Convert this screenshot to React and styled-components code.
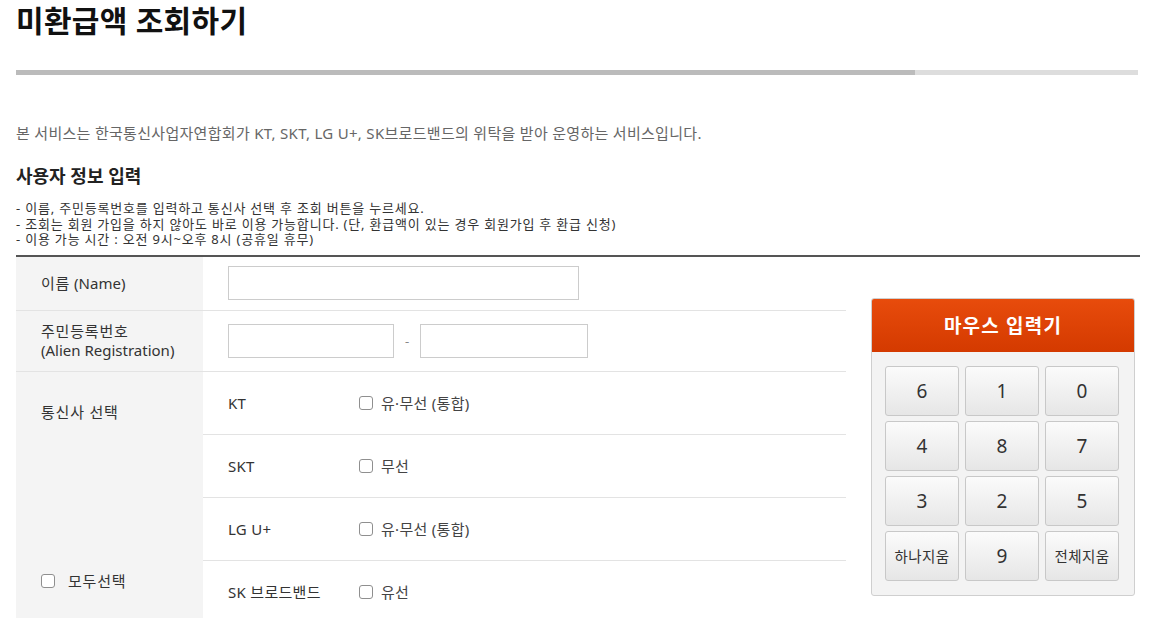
import React, { useState } from 'react';
import styled, { createGlobalStyle } from 'styled-components';

const GlobalStyle = createGlobalStyle`
  html, body {
    margin: 0;
    padding: 0;
    background: #ffffff;
    font-family: "Noto Sans", "Noto Sans CJK KR", sans-serif;
    color: #333333;
  }
`;

const Page = styled.div`
  width: 1124px;
  padding: 0 0 0 16px;
  overflow: hidden;
  height: 618px;
`;

const Title = styled.h1`
  margin: 0;
  padding-top: 2px;
  font-size: 30px;
  line-height: 38px;
  font-weight: 700;
  color: #111111;
  letter-spacing: 0.3px;
`;

const Progress = styled.div`
  display: flex;
  margin-top: 30px;
  width: 1122px;
  height: 5px;
  background: #dddddd;
`;

const ProgressFill = styled.div`
  height: 100%;
  background: #bbbbbb;
`;

const Intro = styled.p`
  margin: 48px 0 0 0;
  font-size: 15px;
  line-height: 20px;
  color: #666666;
  letter-spacing: 0.3px;
`;

const SectionTitle = styled.h2`
  margin: 20px 0 0 0;
  font-size: 18px;
  line-height: 26px;
  font-weight: 700;
  color: #222222;
`;

const Notes = styled.ul`
  list-style: none;
  margin: 12px 0 0 0;
  padding: 0;
  font-size: 13px;
  line-height: 15.5px;
  color: #333333;
  letter-spacing: 0.8px;
`;

const Divider = styled.div`
  margin-top: 7px;
  height: 2px;
  background: #555555;
`;

const Body = styled.div`
  display: flex;
  align-items: flex-start;
`;

const Table = styled.div`
  width: 830px;
  display: grid;
  grid-template-columns: 187px 643px;
`;

const LabelCell = styled.div`
  background: #f4f4f4;
  border-bottom: 1px solid #e3e3e3;
  padding: 0 0 0 25px;
  height: ${(p) => p.$h}px;
  display: flex;
  flex-direction: column;
  justify-content: ${(p) => (p.$split ? 'space-between' : 'center')};
  font-size: 15px;
  line-height: 19px;
  color: #333333;
  box-sizing: border-box;
`;

const KoText = styled.span`
  letter-spacing: 0.8px;
`;

const CarrierLabel = styled.div`
  padding-top: 31px;
  letter-spacing: 0.8px;
`;

const AllSelect = styled.label`
  display: flex;
  align-items: center;
  gap: 13px;
  padding-bottom: 32px;
  letter-spacing: 0.8px;
`;

const FieldCell = styled.div`
  border-bottom: 1px solid #e3e3e3;
  height: ${(p) => p.$h}px;
  display: flex;
  align-items: center;
  padding-left: 25px;
  box-sizing: border-box;
`;

const TextInput = styled.input`
  width: ${(p) => p.$w}px;
  height: 34px;
  box-sizing: border-box;
  border: 1px solid #cccccc;
  margin: 0;
  padding: 0 8px;
  font-size: 14px;
  outline: none;
`;

const Dash = styled.span`
  width: 26px;
  text-align: center;
  font-size: 13px;
  color: #888888;
`;

const CarrierList = styled.div`
  display: flex;
  flex-direction: column;
`;

const CarrierRow = styled.div`
  height: 63px;
  box-sizing: border-box;
  border-bottom: 1px solid #e3e3e3;
  display: flex;
  align-items: center;
  padding-left: 25px;
  font-size: 15px;
  color: #333333;
`;

const CarrierName = styled.span`
  width: 131px;
  letter-spacing: 0.3px;
`;

const CheckLabel = styled.label`
  display: flex;
  align-items: center;
  gap: 8px;
  font-size: 15px;
  color: #444444;
  letter-spacing: 0.3px;
`;

const Check = styled.span`
  width: 14px;
  height: 14px;
  box-sizing: border-box;
  border: 1px solid #8f8f8f;
  border-radius: 3px;
  background: #ffffff;
`;

const Keypad = styled.div`
  width: 262px;
  margin: 41px 0 0 25px;
  border: 1px solid #cfcfcf;
  border-radius: 3px;
  background: #f3f3f3;
  overflow: hidden;
`;

const KeypadHead = styled.div`
  height: 54px;
  margin: -1px -1px 0 -1px;
  border-radius: 3px 3px 0 0;
  background: linear-gradient(#e84c0c, #d43a00);
  color: #ffffff;
  font-size: 19px;
  font-weight: 700;
  letter-spacing: 1.2px;
  display: flex;
  align-items: center;
  justify-content: center;
`;

const KeyGrid = styled.div`
  display: grid;
  grid-template-columns: repeat(3, 74px);
  grid-auto-rows: 50px;
  column-gap: 6px;
  row-gap: 5px;
  padding: 14px 13px 14px 13px;
`;

const Key = styled.button`
  margin: 0;
  padding: 0;
  border: 1px solid #c8c8c8;
  border-radius: 3px;
  background: linear-gradient(#fbfbfb, #e6e6e6);
  font-family: "Noto Sans", "Noto Sans CJK KR", sans-serif;
  font-size: ${(p) => (p.$small ? 14.5 : 19)}px;
  letter-spacing: ${(p) => (p.$small ? 0.4 : 0)}px;
  color: #333333;
  cursor: pointer;
`;

const keys = ['6', '1', '0', '4', '8', '7', '3', '2', '5', '하나지움', '9', '전체지움'];

const carriers = [
  { name: 'KT', option: '유·무선 (통합)' },
  { name: 'SKT', option: '무선' },
  { name: 'LG U+', option: '유·무선 (통합)' },
  { name: 'SK 브로드밴드', option: '유선' },
];

export default function App() {
  const [name, setName] = useState('');

  return (
    <Page>
      <GlobalStyle />
      <Title>미환급액 조회하기</Title>
      <Progress>
        <ProgressFill style={{ width: `${(899 / 1122) * 100}%` }} />
      </Progress>
      <Intro>본 서비스는 한국통신사업자연합회가 KT, SKT, LG U+, SK브로드밴드의 위탁을 받아 운영하는 서비스입니다.</Intro>
      <SectionTitle>사용자 정보 입력</SectionTitle>
      <Notes>
        <li>- 이름, 주민등록번호를 입력하고 통신사 선택 후 조회 버튼을 누르세요.</li>
        <li>- 조회는 회원 가입을 하지 않아도 바로 이용 가능합니다. (단, 환급액이 있는 경우 회원가입 후 환급 신청)</li>
        <li>- 이용 가능 시간 : 오전 9시~오후 8시 (공휴일 휴무)</li>
      </Notes>
      <Divider />
      <Body>
        <Table>
          <LabelCell $h={54}>
            <div><KoText>이름</KoText> (Name)</div>
          </LabelCell>
          <FieldCell $h={54}>
            <TextInput $w={351} value={name} onChange={(e) => setName(e.target.value)} />
          </FieldCell>

          <LabelCell $h={61}>
            <KoText>주민등록번호</KoText>
            <div>(Alien Registration)</div>
          </LabelCell>
          <FieldCell $h={61}>
            <TextInput $w={166} />
            <Dash>-</Dash>
            <TextInput $w={168} />
          </FieldCell>

          <LabelCell $h={252} $split>
            <CarrierLabel>통신사 선택</CarrierLabel>
            <AllSelect>
              <Check />
              모두선택
            </AllSelect>
          </LabelCell>
          <CarrierList>
            {carriers.map((c) => (
              <CarrierRow key={c.name}>
                <CarrierName>{c.name}</CarrierName>
                <CheckLabel>
                  <Check />
                  {c.option}
                </CheckLabel>
              </CarrierRow>
            ))}
          </CarrierList>
        </Table>

        <Keypad>
          <KeypadHead>마우스 입력기</KeypadHead>
          <KeyGrid>
            {keys.map((k) => (
              <Key key={k} $small={k.length > 1}>{k}</Key>
            ))}
          </KeyGrid>
        </Keypad>
      </Body>
    </Page>
  );
}
